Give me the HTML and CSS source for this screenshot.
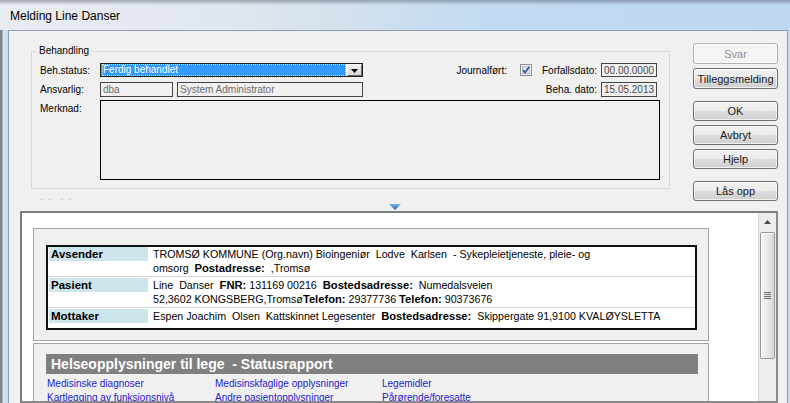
FILE: index.html
```html
<!DOCTYPE html>
<html lang="no">
<head>
<meta charset="utf-8">
<title>Melding Line Danser</title>
<link rel="stylesheet" href="styles.css">
</head>
<body>
<div class="screen">
  <div class="titlebar"><span class="title">Melding Line Danser</span></div>
  <div class="client">
    <div class="top">
      <div class="leftcol">
        <fieldset class="group">
          <legend>Behandling</legend>
          <div class="row r1">
            <span class="lbl">Beh.status:</span>
            <div class="combo">
              <span class="combo-val"><span class="focus">Ferdig behandlet</span></span>
              <span class="combo-btn"><svg width="7" height="4" viewBox="0 0 7 4"><path d="M0 0H7L3.5 4Z" fill="#000"/></svg></span>
            </div>
            <div class="right">
              <span class="rl">Journalført:</span>
              <span class="check"><svg width="12" height="12" viewBox="0 0 12 12"><rect x="0.5" y="0.5" width="11" height="11" fill="#f6f6f6" stroke="#8e8f8f"/><rect x="2.5" y="2.5" width="7" height="7" fill="#dfe4ec" stroke="#b9c0c9"/><path d="M3 6L5 8.6L9.3 2.8" fill="none" stroke="#3f5390" stroke-width="1.7"/></svg></span>
              <span class="rl">Forfallsdato:</span>
              <span class="box date">00.00.0000</span>
            </div>
          </div>
          <div class="row r2">
            <span class="lbl">Ansvarlig:</span>
            <span class="box dba">dba</span>
            <span class="box sys">System Administrator</span>
            <div class="right">
              <span class="rl">Beha. dato:</span>
              <span class="box date">15.05.2013</span>
            </div>
          </div>
          <div class="row r3">
            <span class="lbl">Merknad:</span>
            <div class="memo"></div>
          </div>
        </fieldset>
        <div class="dots">· ·&nbsp; · ·</div>
      </div>
      <div class="buttons">
        <button class="btn disabled">Svar</button>
        <button class="btn gs">Tilleggsmelding</button>
        <button class="btn gl short">OK</button>
        <button class="btn gs short">Avbryt</button>
        <button class="btn gs short">Hjelp</button>
        <button class="btn gl short">Lås opp</button>
      </div>
    </div>
    <div class="splitter">
      <svg width="12" height="6" viewBox="0 0 12 6"><defs><linearGradient id="tg" x1="0" y1="0" x2="0" y2="1"><stop offset="0" stop-color="#7ab3ea"/><stop offset="1" stop-color="#1c5fb5"/></linearGradient></defs><path d="M0 0H12L6 6Z" fill="url(#tg)"/></svg>
    </div>
    <div class="browser">
      <div class="page">
        <div class="panel p1">
          <div class="ptable">
            <div class="prow first">
              <div class="pl"><span class="plbl">Avsender</span></div>
              <div class="pv">TROMSØ KOMMUNE (Org.navn) Bioingeniør&nbsp; Lodve&nbsp; Karlsen&nbsp; - Sykepleietjeneste, pleie- og<br>omsorg&nbsp; <b>Postadresse:</b>&nbsp; ,Tromsø</div>
            </div>
            <div class="prow">
              <div class="pl"><span class="plbl">Pasient</span></div>
              <div class="pv">Line&nbsp; Danser&nbsp; <b>FNR:</b> 131169 00216&nbsp; <b>Bostedsadresse:</b>&nbsp; Numedalsveien<br>52,3602 KONGSBERG,Tromsø<b>Telefon:</b> 29377736 <b>Telefon:</b> 90373676</div>
            </div>
            <div class="prow last">
              <div class="pl"><span class="plbl">Mottaker</span></div>
              <div class="pv">Espen Joachim&nbsp; Olsen&nbsp; Kattskinnet Legesenter&nbsp; <b>Bostedsadresse:</b>&nbsp; Skippergate 91,9100 KVALØYSLETTA</div>
            </div>
          </div>
        </div>
        <div class="panel p2">
          <div class="hbar">Helseopplysninger til lege&nbsp; - Statusrapport</div>
          <div class="links">
            <a href="#">Medisinske diagnoser</a>
            <a href="#">Medisinskfaglige opplysninger</a>
            <a href="#">Legemidler</a>
            <a href="#">Kartlegging av funksjonsnivå</a>
            <a href="#">Andre pasientopplysninger</a>
            <a href="#">Pårørende/foresatte</a>
          </div>
        </div>
      </div>
      <div class="vscroll">
        <div class="sb-up"><svg width="7" height="4" viewBox="0 0 7 4"><path d="M0 4L3.5 0L7 4Z" fill="#4a4a4a"/></svg></div>
        <div class="sb-thumb"><svg width="7" height="8" viewBox="0 0 7 8"><path d="M0 .5H7M0 2.5H7M0 4.5H7M0 6.5H7" stroke="#6f6f6f" stroke-width="1"/></svg></div>
      </div>
    </div>
  </div>
</div>
</body>
</html>
```

FILE: styles.css
```css
* { box-sizing: border-box; }
html, body { margin: 0; padding: 0; }
body {
  width: 790px;
  height: 403px;
  overflow: hidden;
  font-family: "Liberation Sans", Arial, sans-serif;
  color: #000;
}

.screen {
  height: 403px;
  display: flex;
  flex-direction: column;
  background: linear-gradient(to right, #7e8895 0, #7e8895 2px, #d9e3ed 3px, #c9dcee 8px, #c4daf0 100%);
}

.titlebar {
  height: 30px;
  flex: none;
  display: flex;
  align-items: center;
  padding: 2px 0 0 10px;
  font-size: 12px;
  background:
    linear-gradient(to bottom, rgba(70, 80, 95, 0.45) 0, rgba(70, 80, 95, 0) 5px),
    linear-gradient(to right, #e9edf1 0%, #dfe6ed 30%, #cfdfee 48%, #c2daf2 62%, #bed8f2 100%);
}

.client {
  flex: 1;
  min-height: 0;
  margin: 0 2px 0 8px;
  border: 1px solid #8d9db0;
  border-bottom: none;
  background: #f0f0f0;
  display: flex;
  flex-direction: column;
}

.top {
  height: 173px;
  flex: none;
  display: flex;
}

.leftcol {
  margin-left: 22px;
  width: 639px;
  padding-top: 14px;
}

.group {
  margin: 0;
  padding: 6px 9px 8px 8px;
  border: 1px solid #d5dbe0;
  min-width: 0;
}

.group legend {
  font-size: 10px;
  line-height: 12px;
  padding: 0 2px;
  margin-left: -3px;
}

.row {
  display: flex;
  align-items: center;
  font-size: 10px;
}
.r1 { height: 14px; }
.r2 { height: 15px; margin-top: 5px; }
.r3 { margin-top: 3px; align-items: flex-start; }
.lbl { width: 60px; flex: none; }
.r3 .lbl { margin-top: 3px; line-height: 12px; }

.combo {
  width: 263px;
  height: 14px;
  border: 1px solid #202020;
  display: flex;
  background: #fff;
}
.combo-val {
  flex: 1;
  margin: 0 1px 0 0;
  background: #3399ff;
  color: #fff;
  display: flex;
  align-items: center;
  padding-left: 1px;
}
.focus {
  flex: 1;
  height: 100%;
  line-height: 11px;
  outline: 1px dotted #d7e8c8;
  outline-offset: -1px;
  padding-left: 1px;
}
.combo-btn {
  width: 15px;
  flex: none;
  background: linear-gradient(#f2f2f2, #d6d6d6);
  border: 1px solid;
  border-color: #fafafa #6a6a6a #6a6a6a #fafafa;
  display: flex;
  align-items: flex-end;
  justify-content: center;
  padding-bottom: 2px;
}

.right {
  margin-left: auto;
  display: flex;
  align-items: center;
  height: 100%;
  padding-right: 3px;
}
.check {
  width: 12px;
  height: 12px;
  margin: 0 10px 0 13px;
  display: flex;
}

.box {
  height: 100%;
  border: 1px solid #444;
  display: flex;
  align-items: center;
  padding-left: 2px;
  color: #6d6d6d;
  background: #f0f0f0;
  white-space: nowrap;
  overflow: hidden;
}
.date { width: 56px; margin-left: 4px; color: #4a4a4a; }
.dba { width: 73px; }
.sys { width: 186px; margin-left: 4px; }

.memo {
  width: 560px;
  height: 80px;
  border: 1px solid #000;
  background: #f0f0f0;
}

.dots {
  margin-top: 5px;
  padding-left: 9px;
  font-size: 10px;
  line-height: 11px;
  color: #b0b0b0;
  letter-spacing: 1px;
}

.buttons {
  margin-left: 23px;
  width: 85px;
  padding-top: 12px;
  display: flex;
  flex-direction: column;
}
.btn {
  height: 21px;
  padding: 0;
  font-family: inherit;
  font-size: 11px;
  font-weight: normal;
  color: #1a1a1a;
  border: 1px solid #707070;
  border-radius: 3px;
  background: linear-gradient(#f3f3f3 0%, #ebebeb 48%, #dddddd 52%, #cfcfcf 100%);
  box-shadow: inset 0 0 0 1px rgba(255, 255, 255, 0.7);
  display: flex;
  align-items: center;
  justify-content: center;
}
.btn.short { height: 20px; }
.btn.gs { margin-top: 4px; }
.btn.gl { margin-top: 12px; }
.btn.disabled {
  color: #8d8d8d;
  border-color: #adb2b5;
  background: #f4f4f4;
}

.splitter {
  height: 7px;
  flex: none;
  display: flex;
  justify-content: center;
  align-items: flex-start;
  padding-right: 7px;
}

.browser {
  flex: 1;
  min-height: 0;
  margin: 0 9px 0 11px;
  border: 2px solid;
  border-color: #7d7d7d #8a8a8a #8a8a8a #7d7d7d;
  display: flex;
  overflow: hidden;
  background: #fff;
}

.page {
  flex: 1;
  min-width: 0;
  padding: 15px 0 0 11px;
  overflow: hidden;
}

.panel {
  width: 676px;
  border: 1px solid #a3a3a3;
  background: #f0f0f0;
}
.p1 { padding: 16px 11px 10px 12px; }
.p2 { margin-top: 2px; padding: 10px 10px 0 12px; height: 200px; }

.ptable {
  border: 2px solid #111;
  background: #fff;
  font-size: 10.7px;
}
.prow {
  display: flex;
  align-items: flex-start;
  padding: 1px 0 1px;
  border-bottom: 1px solid #d6d6d6;
}
.prow.first { padding-top: 0; }
.prow.last { border-bottom: none; padding-bottom: 5px; }
.pl {
  width: 101px;
  flex: none;
  padding-left: 1px;
}
.plbl {
  display: block;
  width: 99px;
  height: 14px;
  line-height: 14px;
  padding-left: 2px;
  background: #cde5ec;
  font-weight: bold;
  font-size: 11.5px;
}
.pv {
  padding-left: 4px;
  line-height: 14px;
  white-space: nowrap;
}
.pv b { font-size: 11.2px; }

.hbar {
  height: 20px;
  background: #808080;
  color: #fff;
  font-weight: bold;
  font-size: 14px;
  line-height: 20px;
  padding-left: 5px;
  white-space: nowrap;
}
.links {
  margin-top: 3px;
  padding-left: 1px;
  display: grid;
  grid-template-columns: 168px 167px 1fr;
  font-size: 10px;
  line-height: 14px;
}
.links a {
  color: #1b1bcc;
  text-decoration: none;
  white-space: nowrap;
}

.vscroll {
  width: 18px;
  flex: none;
  background: #ededed;
  border-left: 1px solid #d4d4d4;
  display: flex;
  flex-direction: column;
  align-items: center;
}
.sb-up {
  height: 17px;
  width: 100%;
  display: flex;
  align-items: center;
  justify-content: center;
  padding-top: 1px;
}
.sb-thumb {
  margin-top: 2px;
  width: 15px;
  height: 127px;
  border: 1px solid #979797;
  border-radius: 2px;
  background: linear-gradient(to right, #f4f4f4 0%, #e9e9e9 50%, #d8d8d8 100%);
  box-shadow: inset 1px 1px 0 #fff;
  display: flex;
  align-items: center;
  justify-content: center;
}
```
